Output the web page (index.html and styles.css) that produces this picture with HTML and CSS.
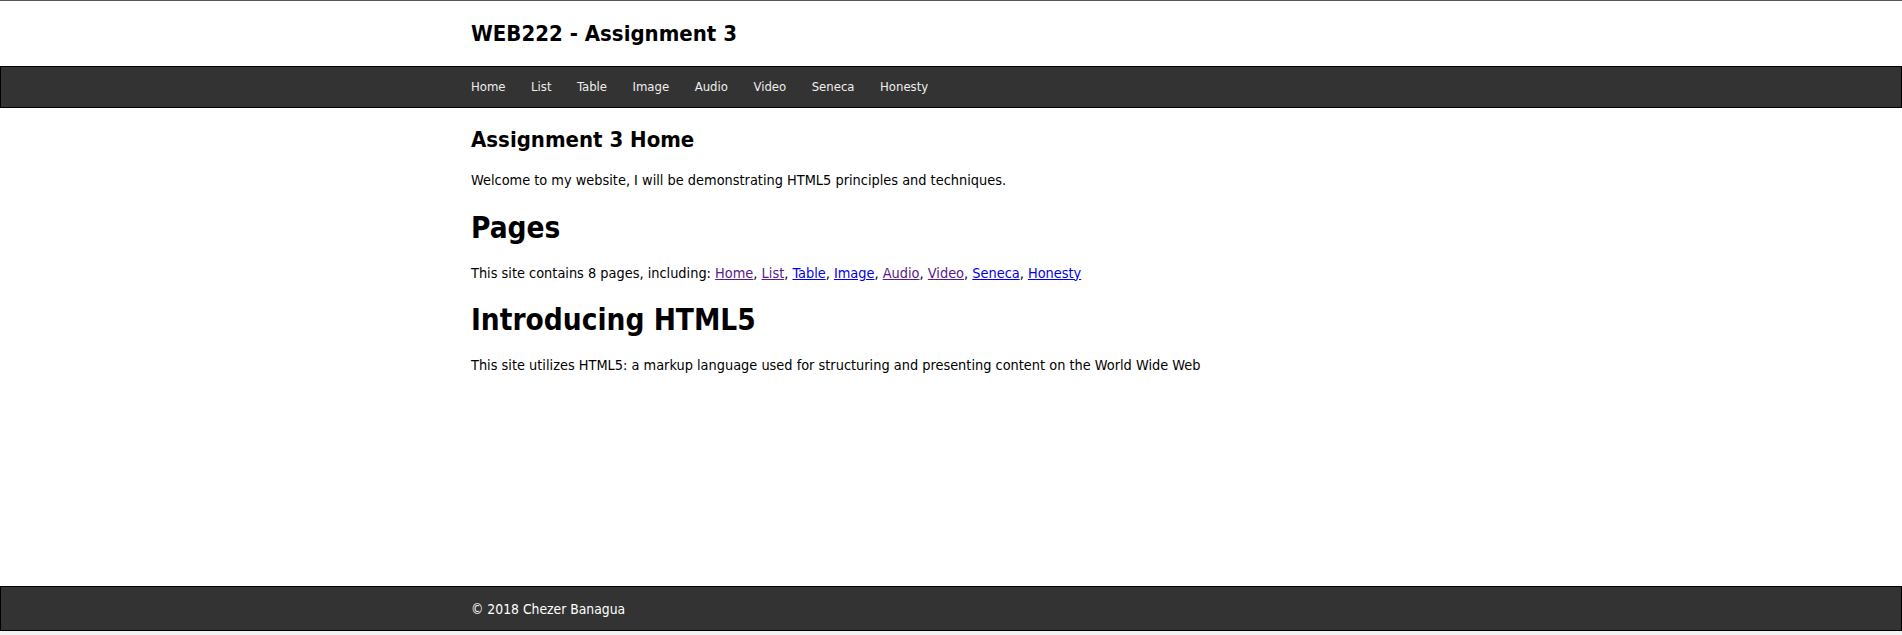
FILE: index.html
```html
<!DOCTYPE html>
<html lang="en">
<head>
<meta charset="utf-8">
<title>WEB222 - Assignment 3</title>
<link rel="stylesheet" href="styles.css">
</head>
<body>
<div class="page">
  <header class="site-header">
    <div class="container">
      <h1 class="site-title">WEB222 - Assignment 3</h1>
    </div>
  </header>
  <nav class="site-nav">
    <div class="container nav-list">
      <a href="#">Home</a>
      <a href="#">List</a>
      <a href="#">Table</a>
      <a href="#">Image</a>
      <a href="#">Audio</a>
      <a href="#">Video</a>
      <a href="#">Seneca</a>
      <a href="#">Honesty</a>
    </div>
  </nav>
  <main class="site-main">
    <div class="container">
      <h2 class="page-title">Assignment 3 Home</h2>
      <p class="text">Welcome to my website, I will be demonstrating HTML5 principles and techniques.</p>
      <h1 class="section-title">Pages</h1>
      <p class="text">This site contains 8 pages, including: <a class="visited" href="#">Home</a>, <a class="visited" href="#">List</a>, <a class="link" href="#">Table</a>, <a class="link" href="#">Image</a>, <a class="visited" href="#">Audio</a>, <a class="visited" href="#">Video</a>, <a class="link" href="#">Seneca</a>, <a class="link" href="#">Honesty</a></p>
      <h1 class="section-title">Introducing HTML5</h1>
      <p class="text">This site utilizes HTML5: a markup language used for structuring and presenting content on the World Wide Web</p>
    </div>
  </main>
  <footer class="site-footer">
    <div class="container">&copy; 2018 Chezer Banagua</div>
  </footer>
</div>
</body>
</html>
```
FILE: styles.css
```css
html {
  background: #f2f2f2;
}
body {
  margin: 0;
  font-family: "DejaVu Sans Condensed", "DejaVu Sans", sans-serif;
  font-size: 14.4px;
  color: #000;
}
.page {
  display: flex;
  flex-direction: column;
  height: 631px;
  background: #fff;
  border-top: 1px solid #555;
  box-sizing: border-box;
}
.container {
  width: 960px;
  margin: 0 auto;
}
.site-header {
  height: 65px;
  display: flex;
  align-items: center;
}
.site-title {
  margin: 0;
  font-size: 22px;
  font-weight: bold;
}
.site-nav {
  height: 42px;
  box-sizing: border-box;
  background: #333;
  border: 1px solid #000;
  display: flex;
  align-items: center;
}
.nav-list {
  display: flex;
  gap: 25.5px;
}
.nav-list a {
  color: #eee;
  text-decoration: none;
  font-size: 13px;
  position: relative;
  top: -1px;
}
.site-main {
  flex: 1;
}
.page-title {
  margin: 19px 0 0;
  font-size: 22px;
  font-weight: bold;
}
.section-title {
  margin: 22.7px 0 0;
  font-size: 29.5px;
  font-weight: bold;
}
.text {
  margin: 20px 0 0;
}
.visited {
  color: #551a8b;
}
.link {
  color: #0000ee;
}
.site-footer {
  height: 45px;
  box-sizing: border-box;
  background: #333;
  border: 1px solid #000;
  color: #fff;
  font-size: 13.8px;
  display: flex;
  align-items: center;
}
```
